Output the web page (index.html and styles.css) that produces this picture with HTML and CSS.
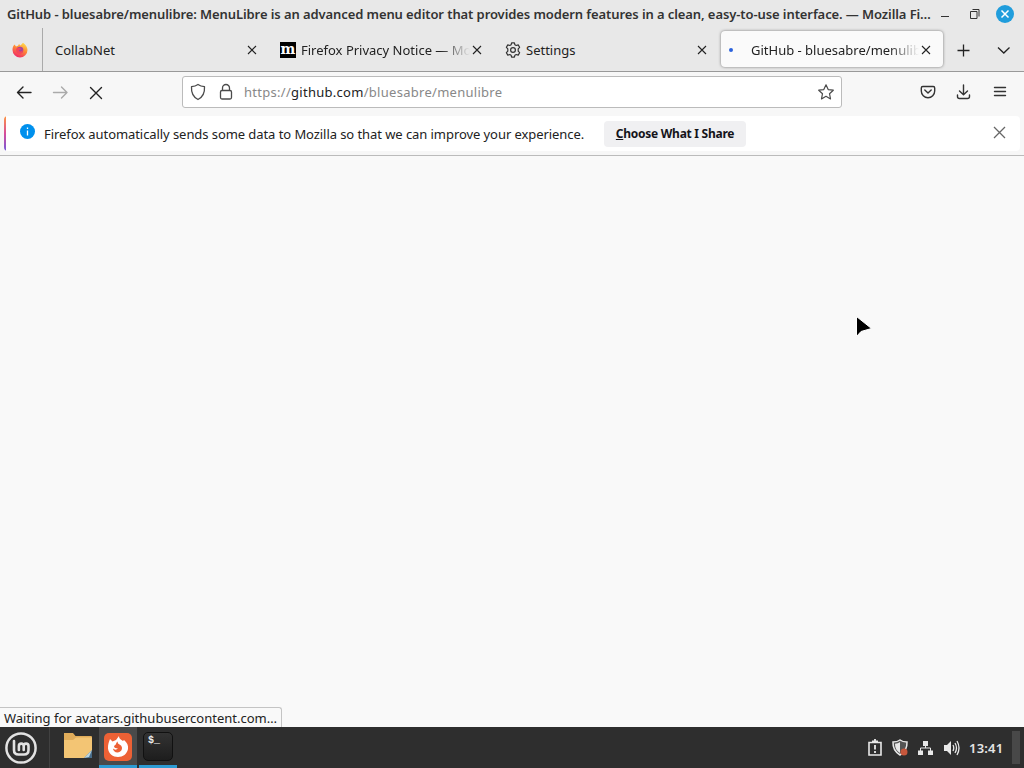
FILE: index.html
```
<!DOCTYPE html>
<html lang="en">
<head>
  <meta charset="UTF-8" />
  <title>GitHub - bluesabre/menulibre</title>
  <link rel="stylesheet" href="styles.css">
</head>
<body>
  <header class="titlebar">
    <span class="window-title">GitHub - bluesabre/menulibre: MenuLibre is an advanced menu editor that provides modern features in a clean, easy-to-use interface. — Mozilla Fi…</span>
    <svg class="window-buttons" width="84" height="28" viewBox="0 0 84 28" fill="none" stroke="#333">
      <path d="M1 16.500h8" />
      <path d="M30.500 11.500h6.500v7h-6.500zM32.500 9.500h6.500v7" />
      <circle cx="65" cy="14" r="9" fill="#209ddc" stroke="none" />
      <path d="M61.500 10.500l7 7M68.500 10.500l-7 7" stroke="#fff" stroke-width="1.500" />
    </svg>
  </header>

  <nav class="tabs">
    <div class="pinned">
      <svg width="16" height="16" viewBox="0 0 16 16">
        <defs>
          <linearGradient id="fox" x1=".8" y1="0" x2=".3" y2="1">
            <stop offset="0" stop-color="#ffe14d" />
            <stop offset=".45" stop-color="#ff8a36" />
            <stop offset="1" stop-color="#f0246b" />
          </linearGradient>
        </defs>
        <path d="M2.500 2.500l1.500 2 2-.8L7 2l1.500 1.500L11 .8c2.500 1.500 4.500 4.500 4.500 7.200a7.500 7.500 0 0 1-15 0c0-2 .5-4 2-5.500z" fill="url(#fox)" />
        <circle cx="8" cy="8" r="3.300" fill="#a4449c" />
        <path d="M4.500 6.500c2-1.500 4.500-.5 4.500 1.200-1.500-.8-2.500.3-1.700 1.300 1.200 1.200 3 .2 3.200-1.200 1 2.500-.8 4-2.800 4-2.500 0-4.200-2.500-3.200-5.300z" fill="#f5455c" />
      </svg>
    </div>
    <div class="tab">
      <span class="label collab">CollabNet</span>
      <svg class="close" viewBox="0 0 10 10"><path d="M1 1l8 8M9 1l-8 8" /></svg>
    </div>
    <div class="tab">
      <span class="moz">m</span>
      <span class="label privacy fade">Firefox Privacy Notice — Mozilla</span>
      <svg class="close" viewBox="0 0 10 10"><path d="M1 1l8 8M9 1l-8 8" /></svg>
    </div>
    <div class="tab">
      <svg class="gear" width="16" height="16" viewBox="0 0 16 16" fill="none" stroke="#333" stroke-width="1.200" stroke-linejoin="round">
        <path d="M6.600.8h2.800l.5 2 1.300.7 2-.6 1.400 2.400L13.200 6.800v2.400l1.400 1.500-1.400 2.400-2-.6-1.300.7-.5 2H6.600l-.5-2-1.300-.7-2 .6-1.400-2.400 1.400-1.500V6.800L1.400 5.300l1.400-2.400 2 .6 1.300-.7z" />
        <circle cx="8" cy="8" r="2.400" />
      </svg>
      <span class="label settings">Settings</span>
      <svg class="close" viewBox="0 0 10 10"><path d="M1 1l8 8M9 1l-8 8" /></svg>
    </div>
    <div class="tab selected">
      <i class="loading"></i>
      <span class="label github fade">GitHub - bluesabre/menulibre</span>
      <svg class="close" viewBox="0 0 10 10"><path d="M1 1l8 8M9 1l-8 8" /></svg>
    </div>
    <svg class="tab-tools" width="81" height="43" viewBox="1 0 81 43" fill="none" stroke="#222" stroke-width="1.300">
      <path d="M15.500 22.500h12M21.500 16.500v12" />
      <path d="M56 19.500l5.800 5.500 5.700-5.500" />
    </svg>
  </nav>

  <div class="toolbar">
    <svg class="nav-buttons" width="182" height="40" viewBox="0 0 182 40" fill="none" stroke-width="1.400" stroke-linecap="round" stroke-linejoin="round">
      <path d="M31 20.500H17.500M23 15l-5.500 5.500L23 26" stroke="#222" />
      <path d="M53.500 20.500H67M61.500 15l5.500 5.500-5.500 5.500" stroke="#aaa" />
      <path d="M90.500 15.500l11 11M101.500 15.500l-11 11" stroke="#222" />
    </svg>
    <div class="urlbar">
      <svg width="54" height="30" viewBox="0 0 54 30" fill="none" stroke="#4b4b4b" stroke-width="1.300" stroke-linejoin="round">
        <path d="M15 7.500c2 1.400 4.200 2 6.500 2.200.4 6-1.600 10.200-6.500 12.800-4.900-2.600-6.900-6.800-6.500-12.800 2.300-.2 4.500-.8 6.500-2.200z" />
        <rect x="37.500" y="13.500" width="11" height="8.500" rx="1.500" />
        <path d="M39.500 13.500v-2.500a3.500 3.500 0 0 1 7 0v2.500" />
      </svg>
      <span class="url">https://<b>github.com</b>/bluesabre/menulibre</span>
      <svg class="star" width="18" height="18" viewBox="0 0 18 18" fill="none" stroke="#4b4b4b" stroke-width="1.200" stroke-linejoin="round">
        <path d="M9 1.800l2.200 4.800 5.100.6-3.800 3.500 1 5.200L9 13.300l-4.500 2.600 1-5.200-3.800-3.500 5.100-.6z" />
      </svg>
    </div>
    <svg class="tools" width="104" height="40" viewBox="0 0 104 40" fill="none" stroke="#333" stroke-width="1.400" stroke-linecap="round" stroke-linejoin="round">
      <path d="M2.800 14.500h10.400q1.500 0 1.500 1.500v3a6.700 6.700 0 0 1-13.400 0v-3q0-1.500 1.500-1.500zM4.800 18l3.200 3 3.200-3" />
      <path d="M43.500 13v9.500M39.500 19l4 3.800 4-3.800M37.500 23v1.500q0 2 2 2h8q2 0 2-2V23" />
      <path d="M74.500 15.500h11M74.500 19.500h11M74.500 23.500h11" />
    </svg>
  </div>

  <div class="notice-wrap">
    <div class="notice">
      <span class="info"><svg width="15" height="15" viewBox="0 0 15 15"><circle cx="7.500" cy="7.500" r="7.500" fill="#0090ed" /><path d="M7.500 6.500v5M7.500 3.500v1.500" stroke="#fff" stroke-width="1.300" /></svg></span>
      <span class="notice-text">Firefox automatically sends some data to Mozilla so that we can improve your experience.</span>
      <button class="share"><u>C</u>hoose What I Share</button>
      <svg class="dismiss" width="13" height="13" viewBox="0 0 13 13"><path d="M1 1l11 11M12 1L1 12" stroke="#666" stroke-width="1.300" /></svg>
    </div>
  </div>

  <main class="page">
    <div class="status">Waiting for avatars.githubusercontent.com…</div>
  </main>

  <footer class="panel">
    <div class="menu">
      <svg width="32" height="32" viewBox="0 0 32 32" fill="none" stroke="#e2e2e2" stroke-linecap="round" stroke-linejoin="round">
        <circle cx="16" cy="16" r="14.600" stroke-width="2.500" />
        <path d="M9 9v9q0 4.500 4.500 4.500h5.500q4.500 0 4.500-4.500v-4a2.400 2.400 0 0 0-4.800 0v4M18.700 14a2.400 2.400 0 0 0-4.800 0v4" stroke-width="2.600" />
      </svg>
    </div>
    <div class="launcher">
      <svg width="30" height="28" viewBox="0 0 30 28">
        <path d="M1 1h9l2.500 3H28q1 0 1 1v20q0 1-1 1H2q-1 0-1-1z" fill="#e0ac5a" />
        <path d="M1 8h9l3-2.500h16V25q0 1-1 1H2q-1 0-1-1z" fill="#f3c574" />
        <path d="M21 26l8-8v8z" fill="#476c89" /><path d="M21 26l8-8-3 7z" fill="#b9d3df" />
      </svg>
    </div>
    <div class="launcher active">
      <svg width="30" height="30" viewBox="0 0 30 30">
        <rect x="1" y="1" width="28" height="28" rx="5" fill="#ed6135" />
        <path d="M7 7l2.500 2.500L13 8l3-4c0 3 2 3.500 4 5l1-1c3 2.500 4.500 5 4 9-1 5-5 8-10 8S5.500 21.500 5 16.500C4.800 12.500 6 9.500 7 7z" fill="#fff" />
        <path d="M15 9.500c-1 2 1 2.500 3 4 2.500 3 0 7-3.500 7-2.500 0-4.500-2-4.500-4 1.500 1.500 3.500 1.500 5 0-2-.3-3.500-.5-4-2 .5-1.500 2-1.500 2-2.500.2-1 .8-2 2-2.500z" fill="#ed6135" />
      </svg>
    </div>
    <div class="launcher open">
      <span class="terminal">$_</span>
    </div>

    <div class="tray">
      <svg width="94" height="20" viewBox="0 0 94 20" fill="none" stroke="#e8e8e8">
        <path d="M2 4.500h12v12.500H2z" stroke-width="1.600" />
        <path d="M5 3.500h6M8 1v2M8 7v4.500M8 13v2" stroke-width="1.800" />
        <path d="M33 2c2 1.500 4.500 2 7 2 .3 6-2 10-7 13-5-3-7.300-7-7-13 2.500 0 5-.5 7-2z" fill="#555" stroke-width="1.500" />
        <path d="M33 4c-1.500 1-3 1.500-5 1.700 0 4.300 1.500 7 5 9.300z" fill="#e8e8e8" stroke="none" />
        <circle cx="37" cy="14" r="3.500" fill="#c7573c" stroke="none" />
        <path d="M56 3h5v5h-5zM51 12.500h5v4.500h-5zM61 12.500h5v4.500h-5z" fill="#e8e8e8" stroke="none" />
        <path d="M58.500 7v3M53.500 13v-3h10v3" />
        <path d="M77 7h3l4-4v14l-4-4h-3z" fill="#e8e8e8" stroke="none" />
        <path d="M86 7q1.500 3 0 6M88 5q3 5 0 10M90 3q4 7 0 14" stroke-width="1.300" />
      </svg>
      <span class="clock">13:41</span>
      <i class="show-desktop"></i>
    </div>
  </footer>

  <svg class="cursor" width="18" height="24" viewBox="0 0 18 24"><path d="M1.500 1.500v20l4.500-5 10.500-3z" fill="#000" stroke="#fff" stroke-width="1" /></svg>
</body>
</html>
```
FILE: styles.css
```
* {
  box-sizing: border-box;
}

body {
  margin: 0;
  width: 1024px;
  height: 768px;
  overflow: hidden;
  display: flex;
  flex-direction: column;
  background: #f9f9fa;
  color: #222;
  font: 13px "Noto Sans", sans-serif;
  white-space: nowrap;
}

svg {
  display: block;
  flex: none;
}

.titlebar {
  height: 28px;
  background: #e8e8e8;
  display: flex;
  align-items: center;
  padding-left: 7px;
}

.window-title {
  width: 933px;
  font-weight: 600;
  color: #333;
  letter-spacing: -0.09px;
}

.tabs {
  height: 44px;
  background: #e8e8e8;
  border-bottom: 1px solid #999;
  display: flex;
}

.pinned {
  width: 43px;
  padding: 14px 0 0 12px;
  border-right: 1px solid #aaa;
}

.tab {
  width: 225px;
  display: flex;
  align-items: center;
  padding: 1px 11px 0 12px;
}

.label {
  flex: 1;
  overflow: hidden;
}

.fade {
  -webkit-mask-image: linear-gradient(to left, transparent 2px, #000 32px);
  mask-image: linear-gradient(to left, transparent 2px, #000 32px);
}

.close {
  width: 10px;
  height: 10px;
  stroke: #222;
  stroke-width: 1.1;
}

.moz {
  width: 16px;
  height: 16px;
  margin-right: 5px;
  background: #000;
  color: #fff;
  font: bold 14px/14px "DejaVu Serif", serif;
  text-align: center;
}

.gear {
  margin-right: 5px;
}

.tab.selected {
  width: 222px;
  height: 36px;
  margin: 3px 0 0 3px;
  padding: 1px 12px 0 8px;
  background: #fafafa;
  border-radius: 4px;
  box-shadow: 0 0 3px rgba(0, 0, 0, 0.5);
}

.loading {
  width: 4px;
  height: 4px;
  margin-right: 18px;
  border-radius: 50%;
  background: #2b62dc;
}

.toolbar {
  height: 44px;
  background: #f7f7f7;
  display: flex;
}

.urlbar {
  width: 660px;
  height: 32px;
  margin-top: 4px;
  background: #fff;
  border: 1px solid #bbb;
  border-radius: 3px;
  display: flex;
  align-items: center;
}

.url {
  flex: 1;
  padding-left: 7px;
  color: #888;
  letter-spacing: 0.28px;
}

.url b {
  font-weight: normal;
  color: #222;
}

.star {
  margin-right: 6px;
}

.tools {
  margin-left: 78px;
}

.notice-wrap {
  height: 40px;
  padding: 0 4px;
  background: #f7f7f7;
  border-bottom: 1px solid #bbb;
}

.notice {
  height: 35px;
  background: linear-gradient(#ff9640, #d74c9b 50%, #7359d9) left / 2px 100% no-repeat #fff;
  border-radius: 4px;
  display: flex;
  align-items: center;
  padding-left: 16px;
}

.info {
  width: 24px;
  padding-bottom: 4px;
}

.notice-text {
  width: 560px;
  letter-spacing: -0.07px;
}

.share {
  width: 142px;
  height: 26px;
  border: 0;
  border-radius: 4px;
  padding: 0;
  background: #f0f0f2;
  color: #15141a;
  font: 700 12px "Noto Sans", sans-serif;
  letter-spacing: -0.27px;
}

.dismiss {
  margin: 0 14px 3px auto;
}

.page {
  flex: 1;
  background: #f9f9f9;
  display: flex;
  align-items: flex-end;
}

.status {
  width: 282px;
  height: 20px;
  padding: 1px 4px;
  border: 1px solid #c4c4c4;
  border-width: 1px 1px 0 0;
  border-radius: 0 3px 0 0;
  background: #f9f9f9;
}

.panel {
  height: 41px;
  background: #2e2e2e;
  display: flex;
}

.menu {
  width: 50px;
  padding: 5px;
  border-right: 1px solid #414141;
  margin-right: 9px;
}

.launcher {
  width: 38px;
  margin-right: 2px;
  padding: 5px 4px 0;
  border-bottom: 3px solid transparent;
}

.launcher.active {
  background: #4a4a4a;
  border-color: #2d9bd3;
}

.launcher.open {
  border-color: #2d9bd3;
}

.terminal {
  display: block;
  width: 30px;
  height: 29px;
  padding: 2px 4px;
  background: linear-gradient(#333, #1d1d1d);
  border: 1px solid #111;
  border-radius: 5px;
  color: #eee;
  font: bold 10px "Liberation Mono", monospace;
}

.tray {
  margin-left: auto;
  display: flex;
  align-items: center;
}

.clock {
  margin-left: 8px;
  width: 43px;
  color: #e4e4e4;
  font-weight: 600;
  letter-spacing: 0.2px;
}

.show-desktop {
  width: 8px;
  height: 33px;
  margin-right: 4px;
  background: #484848;
}

.cursor {
  position: absolute;
  left: 855px;
  top: 315px;
}
```
